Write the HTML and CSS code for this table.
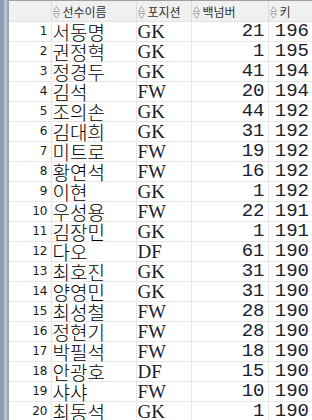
FILE: index.html
```html
<!DOCTYPE html>
<html lang="ko">
<head>
<meta charset="utf-8">
<link rel="stylesheet" href="styles.css">
</head>
<body>
<div class="wrap">
  <div class="frame"></div>
  <table class="grid">
    <colgroup>
      <col class="c-num"><col class="c-name"><col class="c-pos"><col class="c-back"><col class="c-key">
    </colgroup>
    <thead>
      <tr>
        <th class="h-num"></th>
        <th><span class="sort"><svg width="7" height="13" viewBox="0 0 7 13"><path d="M3.5 0.5 L6.5 5.5 L0.5 5.5 Z M0.5 7.5 L6.5 7.5 L3.5 12.5 Z" fill="#f4f4f4" stroke="#a8a8a8" stroke-width="1"/></svg></span>선수이름</th>
        <th><span class="sort"><svg width="7" height="13" viewBox="0 0 7 13"><path d="M3.5 0.5 L6.5 5.5 L0.5 5.5 Z M0.5 7.5 L6.5 7.5 L3.5 12.5 Z" fill="#f4f4f4" stroke="#a8a8a8" stroke-width="1"/></svg></span>포지션</th>
        <th><span class="sort"><svg width="7" height="13" viewBox="0 0 7 13"><path d="M3.5 0.5 L6.5 5.5 L0.5 5.5 Z M0.5 7.5 L6.5 7.5 L3.5 12.5 Z" fill="#f4f4f4" stroke="#a8a8a8" stroke-width="1"/></svg></span>백넘버</th>
        <th><span class="sort"><svg width="7" height="13" viewBox="0 0 7 13"><path d="M3.5 0.5 L6.5 5.5 L0.5 5.5 Z M0.5 7.5 L6.5 7.5 L3.5 12.5 Z" fill="#f4f4f4" stroke="#a8a8a8" stroke-width="1"/></svg></span>키</th>
      </tr>
    </thead>
    <tbody>
      <tr><td class="num">1</td><td class="name">서동명</td><td class="pos">GK</td><td class="val">21</td><td class="val">196</td></tr>
      <tr><td class="num">2</td><td class="name">권정혁</td><td class="pos">GK</td><td class="val">1</td><td class="val">195</td></tr>
      <tr><td class="num">3</td><td class="name">정경두</td><td class="pos">GK</td><td class="val">41</td><td class="val">194</td></tr>
      <tr><td class="num">4</td><td class="name">김석</td><td class="pos">FW</td><td class="val">20</td><td class="val">194</td></tr>
      <tr><td class="num">5</td><td class="name">조의손</td><td class="pos">GK</td><td class="val">44</td><td class="val">192</td></tr>
      <tr><td class="num">6</td><td class="name">김대희</td><td class="pos">GK</td><td class="val">31</td><td class="val">192</td></tr>
      <tr><td class="num">7</td><td class="name">미트로</td><td class="pos">FW</td><td class="val">19</td><td class="val">192</td></tr>
      <tr><td class="num">8</td><td class="name">황연석</td><td class="pos">FW</td><td class="val">16</td><td class="val">192</td></tr>
      <tr><td class="num">9</td><td class="name">이현</td><td class="pos">GK</td><td class="val">1</td><td class="val">192</td></tr>
      <tr><td class="num">10</td><td class="name">우성용</td><td class="pos">FW</td><td class="val">22</td><td class="val">191</td></tr>
      <tr><td class="num">11</td><td class="name">김장민</td><td class="pos">GK</td><td class="val">1</td><td class="val">191</td></tr>
      <tr><td class="num">12</td><td class="name">다오</td><td class="pos">DF</td><td class="val">61</td><td class="val">190</td></tr>
      <tr><td class="num">13</td><td class="name">최호진</td><td class="pos">GK</td><td class="val">31</td><td class="val">190</td></tr>
      <tr><td class="num">14</td><td class="name">양영민</td><td class="pos">GK</td><td class="val">31</td><td class="val">190</td></tr>
      <tr><td class="num">15</td><td class="name">최성철</td><td class="pos">FW</td><td class="val">28</td><td class="val">190</td></tr>
      <tr><td class="num">16</td><td class="name">정현기</td><td class="pos">FW</td><td class="val">28</td><td class="val">190</td></tr>
      <tr><td class="num">17</td><td class="name">박필석</td><td class="pos">FW</td><td class="val">18</td><td class="val">190</td></tr>
      <tr><td class="num">18</td><td class="name">안광호</td><td class="pos">DF</td><td class="val">15</td><td class="val">190</td></tr>
      <tr><td class="num">19</td><td class="name">샤샤</td><td class="pos">FW</td><td class="val">10</td><td class="val">190</td></tr>
      <tr><td class="num">20</td><td class="name">최동석</td><td class="pos">GK</td><td class="val">1</td><td class="val">190</td></tr>
    </tbody>
  </table>
</div>
</body>
</html>
```

FILE: styles.css
```css
html, body {
  margin: 0;
  padding: 0;
  background: #ffffff;
  overflow: hidden;
}
.wrap {
  display: flex;
  align-items: flex-start;
  width: 312px;
  height: 420px;
  overflow: hidden;
}
.frame {
  flex: 0 0 9px;
  align-self: stretch;
  background: linear-gradient(to right, #8e9bb0 0, #8e9bb0 4px, #b8c3d3 4px, #b8c3d3 7px, #98a4b8 7px, #98a4b8 9px);
}
.grid {
  border-collapse: collapse;
  table-layout: fixed;
  width: 303px;
  font-family: "Noto Sans CJK KR", "Noto Sans", sans-serif;
}
.c-num { width: 42px; }
.c-name { width: 85px; }
.c-pos { width: 55px; }
.c-back { width: 77px; }
.c-key { width: 44px; }
thead th {
  height: 20px;
  padding: 0 0 0 1px;
  background: #f0f0f0;
  border-top: 1px solid #a0a0a0;
  border-bottom: 1px solid #e3e3e3;
  border-left: 1px solid #dcdcdc;
  text-align: left;
  font-weight: normal;
  font-size: 12px;
  color: #303030;
  white-space: nowrap;
  line-height: 19px;
  vertical-align: middle;
}
thead th.h-num { border-left: none; }
.sort {
  display: inline-block;
  vertical-align: -2px;
  margin-right: 3px;
}
.sort svg { display: block; }
tbody td {
  height: 19px;
  padding: 0;
  border-bottom: 1px solid #e6e6e6;
  border-left: 1px solid #e6e6e6;
  white-space: nowrap;
  vertical-align: middle;
  line-height: 19px;
}
tbody td.num {
  border-left: none;
  text-align: right;
  padding-right: 3px;
  font-family: "DejaVu Sans", "Liberation Sans", sans-serif;
  font-size: 12px;
  color: #202020;
  background: #ffffff;
}
tbody td.name {
  font-family: "Noto Sans CJK KR", sans-serif;
  font-size: 19px;
  font-weight: 300;
  color: #000000;
  padding-left: 1px;
}
tbody td.pos {
  font-family: "Liberation Serif", serif;
  font-size: 19px;
  color: #1a1a2a;
  padding-left: 1px;
}
tbody td.val {
  font-family: "Liberation Mono", monospace;
  font-size: 19px;
  color: #1a2030;
  text-align: right;
  padding-right: 3px;
}
```
